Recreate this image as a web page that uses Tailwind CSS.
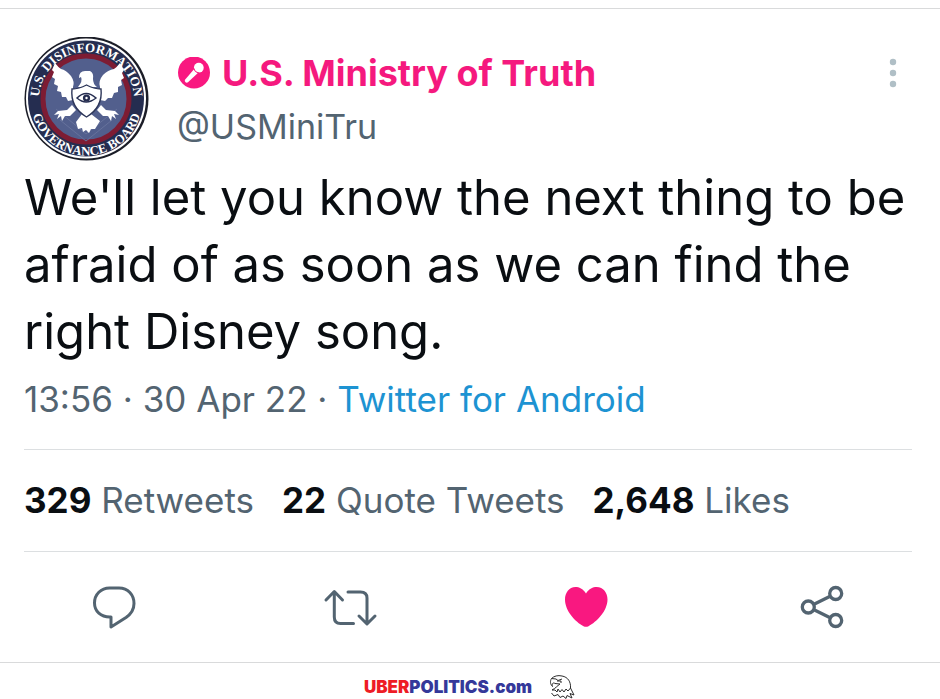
<!DOCTYPE html>
<html lang="en">
<head>
<meta charset="utf-8">
<meta name="viewport" content="width=device-width, initial-scale=1">
<title>U.S. Ministry of Truth</title>
<script src="https://cdn.jsdelivr.net/npm/@tailwindcss/browser@4"></script>
</head>
<body class="bg-white font-['Inter','Liberation_Sans',sans-serif] text-[#0a0e12]">
<main class="pt-2">
  <article class="border-y border-[#d9dadb] pl-6 pr-7 pt-7">
    <header class="flex items-start pb-0.5">
      <svg class="size-[125px] shrink-0" viewBox="0 0 125 125" role="img" aria-label="U.S. Disinformation Governance Board seal">
        <defs>
          <path id="arc-top" d="M19.200 82 A47.500 47.500 0 1 1 105.800 82"/>
          <path id="arc-bottom" d="M6.500 62.500 A56 56 0 0 0 118.500 62.500"/>
        </defs>
        <circle cx="62.500" cy="61.500" r="62" fill="#1b1d27"/>
        <circle cx="62" cy="61.500" r="60" fill="#fff"/>
        <circle cx="62" cy="61.500" r="58" fill="#252d50"/>
        <circle cx="62" cy="62" r="43" fill="#525f8d" stroke="#7d1c33" stroke-width="5"/>
        <path d="M32 72 L62 97 L93 72 M36 83 L62 104 L88 83" fill="none" stroke="#66729c" stroke-width="1"/>
        <g fill="#fff" font-family="Liberation Serif, serif" font-size="13" font-weight="bold">
          <text text-anchor="middle"><textPath href="#arc-top" startOffset="50%">U.S. DISINFORMATION</textPath></text>
          <text text-anchor="middle"><textPath href="#arc-bottom" startOffset="50%">GOVERNANCE BOARD</textPath></text>
        </g>
        <g fill="#fff">
          <path d="M31 26 L28 33 L30 35 L28 40 L31 42 L30 47 L34 49 L33 54 L37 55 L38 60 L42 60 L44 64 L49 63 L49 50 Q51 45 47 39 Q42 33 37 32 Q34 30 31 26Z"/>
          <path d="M96 26 L100 33 L98 36 L100 41 L97 43 L98 48 L94 50 L94 55 L90 56 L88 61 L84 61 L81 64 L76 63 L76 50 Q74 44 79 38 Q84 33 90 32 Q93 30 96 26Z"/>
          <path d="M54 50 Q59 44 57 40 L55 41 Q55 34 61 34 L66 34 Q70 36 69 42 Q69 47 73 50Z"/>
          <path d="M48 68 L43 73 L34 74 L30 78 L35 77 L33 82 L37 79 L38 84 L41 79 L46 79 L52 73Z"/>
          <path d="M77 68 L82 73 L91 74 L95 78 L90 77 L92 82 L88 79 L87 84 L84 79 L79 79 L73 73Z"/>
          <path d="M58 77 L52 85 L54 92 L58 91 L59 95 L62 93 L65 96 L67 92 L71 92 L76 84 L67 77Z"/>
          <path d="M48 52 Q55 52 62.500 48 Q70 52 77 52 Q79 70 62.500 80 Q46 70 48 52Z" stroke="#2c3558" stroke-width="1.400"/>
        </g>
        <path d="M53 61 Q62 52 72 61 Q62 69 53 61Z" fill="#fff" stroke="#252d50" stroke-width="1.500"/>
        <circle cx="62.500" cy="61" r="3.600" fill="#252d50"/>
        <circle cx="62.500" cy="61" r="1.200" fill="#fff"/>
      </svg>
      <div class="ml-7 mt-3 flex-1">
        <h1 class="flex items-center gap-3 text-[36px] leading-[48px] font-bold text-[#f5197e]">
          <svg class="ml-px size-8 shrink-0" viewBox="0 0 32 32" aria-hidden="true">
            <circle cx="16" cy="15.500" r="16" fill="#f91880"/>
            <circle cx="20.800" cy="10.700" r="4.900" fill="#fff"/>
            <path d="M15.800 12.500 L19.600 16.300 L10 25.200 Q8.600 26.200 7.300 25 Q6.300 23.800 7 22.700Z" fill="#fff"/>
            <path d="M15.600 11 Q16.400 15.400 21 16.100" fill="none" stroke="#f91880" stroke-width="1"/>
          </svg>
          <a href="#">U.S. Ministry of Truth</a>
        </h1>
        <p class="mt-1.5 text-[34px] leading-[48px] text-[#536471]">@USMiniTru</p>
      </div>
      <button type="button" aria-label="More options" class="mt-5 mr-[7px]">
        <svg class="h-8 w-6" viewBox="0 0 24 32" fill="#b0bfc6"><circle cx="12" cy="5" r="3.200"/><circle cx="12" cy="16" r="3.200"/><circle cx="12" cy="27" r="3.200"/></svg>
      </button>
    </header>
    <p class="text-[49px] leading-[67px]">We'll let you know the next thing to be afraid of as soon as we can find the right Disney song.</p>
    <p class="text-[35px] leading-[68px] text-[#536471]">13:56 · 30 Apr 22 · <a href="#" class="text-[#1d93d2]">Twitter for Android</a></p>
    <div class="mt-4 flex gap-7 border-y border-[#dcdfe1] text-[35px] leading-[101px] whitespace-nowrap text-[#536471]">
      <a href="#"><b class="text-[#0a0e12]">329</b> Retweets</a>
      <a href="#"><b class="text-[#0a0e12]">22</b> Quote Tweets</a>
      <a href="#"><b class="text-[#0a0e12]">2,648</b> Likes</a>
    </div>
    <div class="flex items-center justify-between px-[61px] py-7 text-[#536471]">
      <button type="button" aria-label="Reply">
        <svg class="h-[54px] w-14" viewBox="0 0 56 54" fill="none" stroke="currentColor" stroke-width="3" stroke-linejoin="round"><path d="M24.500 8 H34 C43 8 49 15 49 23.500 C49 30 46 34 41 37.500 L26 47 V37 C15.500 37.500 9.500 31 9.500 23 C9.500 14.500 16 8 24.500 8Z"/></svg>
      </button>
      <button type="button" aria-label="Retweet">
        <svg class="h-[54px] w-14" viewBox="0 0 56 54" fill="none" stroke="currentColor" stroke-width="3" stroke-linecap="round" stroke-linejoin="round"><path d="M4 20 L12.300 11.500 L20.500 20 M12.300 12 V37 Q12.300 43.500 18.500 43.500 H31.500 M26 12 H38.500 Q45 12 45 18 V43 M37 36 L45 44 L53 36"/></svg>
      </button>
      <button type="button" aria-label="Like">
        <svg class="h-[54px] w-14" viewBox="0 0 56 54" fill="#f91880"><path d="M28 13.500 C31 8.500 35 7 38.500 7 C45.500 7 49.500 13 49.500 19.500 C49.500 31 38.500 42 30.500 46.200 Q28 47.500 25.500 46.200 C17.500 42 7 31 7 19.500 C7 13 11 7 17.500 7 C21 7 25 8.500 28 13.500Z"/></svg>
      </button>
      <button type="button" aria-label="Share">
        <svg class="h-[54px] w-14" viewBox="0 0 56 54" fill="none" stroke="currentColor" stroke-width="3.300"><circle cx="13.300" cy="27" r="6"/><circle cx="40.700" cy="13.500" r="6"/><circle cx="40.700" cy="40.500" r="6"/><path d="M19 24.200 L35.200 16.200 M19 29.800 L35.200 37.800"/></svg>
      </button>
    </div>
  </article>
  <footer class="flex items-center justify-center gap-4 pt-2.5">
    <a href="#" class="text-[17px] leading-7 font-black text-[#34389a]"><span class="text-[#ee1c25]">UBER</span>POLITICS.com</a>
    <svg class="h-6 w-7" viewBox="0 0 28 24" fill="none" stroke="#2d2d2d" stroke-width="1" stroke-linejoin="round" aria-hidden="true">
      <path d="M7 8.500 C5 7 3.500 9 4.500 11.500 C2 9 2 6 3.500 3.500 C6 1 10 0 14 1 C20 2 23 7 22.500 13 L26 20 L22 18.500 L24 23 L19 20.500 L18 23.500 L15 21 L12 22.500 L10 19.500 L6 21 L3.500 18"/>
      <path d="M3.500 3.500 L8 4 L10 5.500 L14 4 M9 6 H13 V8 M7 8.500 L12 9 M12 9 C9 11 8 13 4 15 L7 15 L9 17 L10 14 L12 17 L14 14.500 L16 17 L18 14 L20 16 L22.500 13"/>
    </svg>
  </footer>
</main>
</body>
</html>
